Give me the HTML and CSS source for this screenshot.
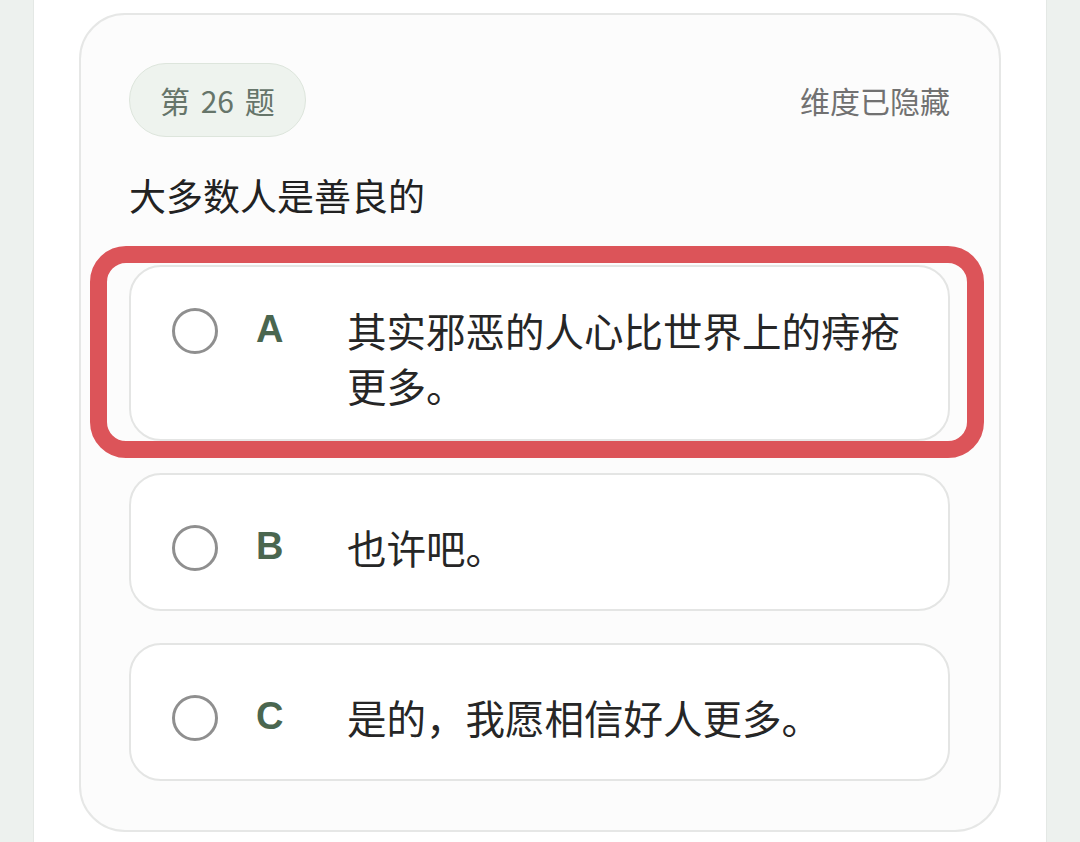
FILE: index.html
```html
<!DOCTYPE html>
<html lang="zh-CN">
<head>
<meta charset="utf-8">
<title>第 26 题</title>
<link rel="stylesheet" href="styles.css">
</head>
<body>
<div class="page">
  <section class="card">
    <div class="card-head">
      <span class="badge">第 26 题</span>
      <span class="hint">维度已隐藏</span>
    </div>
    <h2 class="question">大多数人是善良的</h2>
    <div class="options">
      <div class="option highlighted">
        <div class="row">
          <span class="radio"></span>
          <span class="letter">A</span>
          <span class="text">其实邪恶的人心比世界上的痔疮更多。</span>
        </div>
        <span class="mark"></span>
      </div>
      <div class="option">
        <div class="row">
          <span class="radio"></span>
          <span class="letter">B</span>
          <span class="text">也许吧。</span>
        </div>
      </div>
      <div class="option">
        <div class="row">
          <span class="radio"></span>
          <span class="letter">C</span>
          <span class="text">是的，我愿相信好人更多。</span>
        </div>
      </div>
    </div>
  </section>
</div>
</body>
</html>
```
FILE: styles.css
```css
* { box-sizing: border-box; }

html, body {
  margin: 0;
  padding: 0;
}

body {
  background: #edf1ee;
  font-family: "Noto Sans CJK SC", "Noto Sans", sans-serif;
  color: #262626;
}

.page {
  margin: 0 34px;
  width: 1012px;
  min-height: 842px;
  background: #ffffff;
  box-shadow: 0 0 0 1px #e4e8e5;
  padding: 13px 45px 12px 45px;
}

.card {
  border: 2px solid #e6e7e6;
  border-radius: 46px;
  background: #fcfcfc;
  padding: 48px 49px 49px 48px;
}

.card-head {
  display: flex;
  align-items: center;
  justify-content: space-between;
}

.badge {
  display: inline-block;
  height: 74px;
  line-height: 72px;
  padding: 0 30px;
  border: 1px solid #dde5dc;
  border-radius: 37px;
  background: #eef3ee;
  color: #66756a;
  font-size: 30px;
  word-spacing: 4px;
}

.hint {
  font-size: 30px;
  color: #717171;
  line-height: 40px;
}

.question {
  margin: 33px 0 45px 0;
  font-size: 37px;
  line-height: 50px;
  font-weight: 400;
  color: #222222;
}

.options {
  display: flex;
  flex-direction: column;
  gap: 32px;
}

.option {
  position: relative;
  display: flex;
  align-items: center;
  min-height: 138px;
  padding: 35px 38px 27px 41px;
  border: 2px solid #e4e5e4;
  border-radius: 32px;
  background: #ffffff;
}

.row {
  display: flex;
  align-items: flex-start;
  width: 100%;
}

.radio {
  flex: none;
  width: 46px;
  height: 46px;
  margin-top: 6px;
  border: 3.5px solid #8f8f8f;
  border-radius: 50%;
  background: #ffffff;
}

.letter {
  flex: none;
  width: 91px;
  margin-left: 38px;
  font-family: "Liberation Sans", Arial, sans-serif;
  font-weight: 700;
  font-size: 38px;
  line-height: 55px;
  color: #4a664f;
}

.text {
  flex: 1;
  font-size: 39.5px;
  line-height: 55px;
  color: #262626;
}

.mark {
  position: absolute;
  top: -21px;
  left: -41px;
  right: -36px;
  bottom: -19px;
  border: 17px solid #dc5459;
  border-radius: 36px;
  pointer-events: none;
}
```
